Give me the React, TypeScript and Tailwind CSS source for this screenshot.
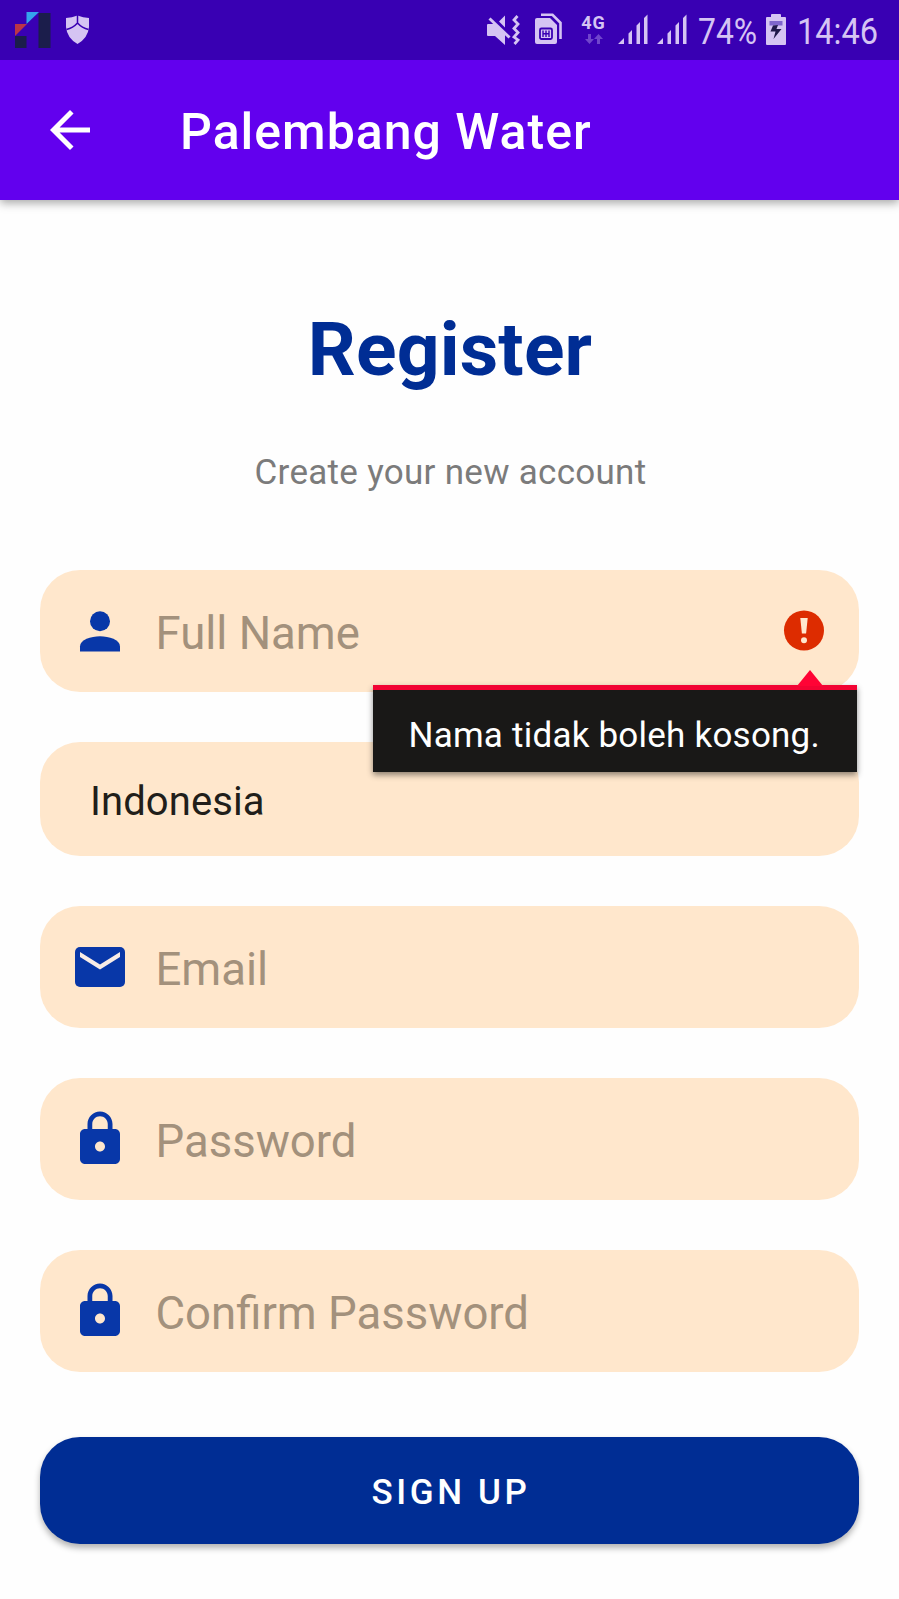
import type { ReactNode } from "react";

const LOCK =
  "M18 8h-1V6c0-2.760-2.240-5-5-5S7 3.240 7 6v2H6c-1.100 0-2 .9-2 2v10c0 1.100.9 2 2 2h12c1.100 0 2-.9 2-2V10c0-1.100-.9-2-2-2zm-6 9c-1.100 0-2-.9-2-2s.9-2 2-2 2 .9 2 2-.9 2-2 2zm3.100-9H8.900V6c0-1.710 1.390-3.100 3.100-3.100 1.710 0 3.100 1.390 3.100 3.100v2z";

function PersonIcon() {
  return (
    <svg viewBox="0 0 24 24" className="size-[60px] shrink-0 fill-[#0837a8]">
      <circle cx="12" cy="8.100" r="4" />
      <path d="M12 14.100c-3.600 0-8 1.400-8 4.100V20.200h16v-2c0-2.700-4.400-4.100-8-4.100z" />
    </svg>
  );
}

function MailIcon() {
  return (
    <svg viewBox="0 0 24 24" className="size-[60px] shrink-0">
      <rect x="2" y="4" width="20" height="16" rx="2" className="fill-[#0837a8]" />
      <path d="M4 6l8 5 8-5v2l-8 5-8-5z" className="fill-[#f8ece6]" />
    </svg>
  );
}

function LockIcon() {
  return (
    <svg viewBox="0 0 24 24" className="size-[60px] shrink-0 fill-[#0837a8]">
      <path d={LOCK} />
    </svg>
  );
}

function Field({ icon, label, children }: { icon: ReactNode; label: string; children?: ReactNode }) {
  return (
    <div className="relative flex h-[122px] items-center rounded-[40px] bg-[#ffe7cc] pl-[30px] pr-[25px]">
      {icon}
      <span className="ml-[25.5px] mt-[6px] flex-1 whitespace-nowrap text-[45.5px] leading-[60px] text-[#a3917c]">
        {label}
      </span>
      {children}
    </div>
  );
}

function Signal() {
  return (
    <svg viewBox="0 0 30 31" className="h-[31px] w-[30px] fill-[#d5c4f3]">
      <path d="M0 30l6-6V30zM10.500 19.500l3.500-3.500V30h-3.500zM18.500 11.500l3.500-3.500V30h-3.500zM26 4l3.500-3.500V30H26z" />
    </svg>
  );
}

function StatusBar() {
  return (
    <div className="z-10 flex h-[60px] items-start bg-[#3900b3] pl-[15px] text-[#d5c4f3]">
      <svg viewBox="0 0 36 36" className="mt-[12px] size-[36px]">
        <path d="M0 12h12L0 24z" fill="#bb3548" />
        <path d="M11.500 0H24L11.500 12z" fill="#35a4ec" />
        <path d="M0 24h11.500v12H0zM23.500 1H35.500v35H23.500z" fill="#1b1d4b" />
      </svg>
      <svg viewBox="0 0 24 29" className="ml-[15px] mt-[15px] h-[29px] w-[24px]">
        <path d="M0 3Q6 2.500 11.500 0.500 17 2.500 23 3V12Q22 23 11.500 29 1 23 0 12z" fill="#d5c4f3" />
        <path d="M11.500 0v8M.5 14.500Q7 13 11.500 8 16 13 22.500 14.500" fill="none" stroke="#3900b3" strokeWidth="1.500" />
      </svg>
      <svg viewBox="0 0 34 32" className="ml-[397px] mt-[14px] h-[32px] w-[34px]">
        <path d="M0 11q0-1 1-1h7l10 10v11L8 22H1q-1 0-1-1z" fill="#d5c4f3" />
        <path d="M12 7.500l6-6v12z" fill="#d5c4f3" />
        <path d="M2.500 4.500l20 19" stroke="#d5c4f3" strokeWidth="3" />
        <path d="M30.500 2l-3.500 4 4 4-4 4.500 4 4-4 4.500 4 3-3.500 4" fill="none" stroke="#d5c4f3" strokeWidth="2.800" />
      </svg>
      <svg viewBox="0 0 28 32" className="ml-[14px] mt-[13px] h-[32px] w-[28px]">
        <path d="M6 1.800h11.500l8 8V26" fill="none" stroke="#d5c4f3" strokeWidth="2.600" />
        <path d="M2 5h13l7 7v17q0 2-2 2H2q-2 0-2-2V7q0-2 2-2z" fill="#d5c4f3" />
        <rect x="5" y="15.500" width="12" height="10.500" rx="1.500" fill="none" stroke="#3900b3" strokeWidth="1.800" />
        <path d="M8 17.500v6.500M11 17.500v6.500M14 17.500v6.500M8 20.700h6" stroke="#3900b3" strokeWidth="1.400" />
      </svg>
      <div className="ml-[18px] mt-[14px] flex w-[25px] flex-col items-center">
        <span className="text-[18px] font-bold leading-[18px] tracking-[1px]">4G</span>
        <svg viewBox="0 0 18 10" className="mt-[2px] h-[10px] w-[18px] fill-[#7045cc]">
          <path d="M3 0h3v5h3l-4.500 5L0 5h3zM12 10h3V5h3l-4.500-5L9 5h3z" />
        </svg>
      </div>
      <div className="ml-[12px] mt-[14px] flex gap-[9px]">
        <Signal />
        <Signal />
      </div>
      <span className="ml-[10.500px] mt-[10px] w-[59px] origin-left scale-x-[0.860] whitespace-nowrap text-[37px] leading-[44px]">74%</span>
      <svg viewBox="0 0 20 31" className="ml-[9.500px] mt-[14px] h-[31px] w-[20px]">
        <path d="M0 4q0-1 1-1h4V1q0-1 1-1h8q1 0 1 1v2h4q1 0 1 1v26q0 1-1 1H1q-1 0-1-1z" fill="#d5c4f3" />
        <path d="M3.500 7h13v4.500h-13z" fill="#7f66cc" />
        <path d="M7 11.500l5-.5-1.500 4H15.500L7.500 25l2-7.500H4.500z" fill="#20194a" />
      </svg>
      <span className="ml-[11px] mt-[10px] w-[82px] origin-left scale-x-[0.880] whitespace-nowrap text-[37px] leading-[44px]">14:46</span>
    </div>
  );
}

function ErrorPopup() {
  return (
    <div className="absolute left-[333px] top-[114.5px] z-10 h-[87px] w-[484px] border-t-[5px] border-[#f20333] bg-[#191817] pl-[35.5px] pt-[25px] shadow-[0_3px_6px_rgba(0,0,0,0.45)]">
      <svg viewBox="0 0 26 16" className="absolute right-[34px] top-[-20px] h-[16px] w-[26px] fill-[#ff0335]">
        <path d="M13 0l13 16H0z" />
      </svg>
      <span className="block whitespace-nowrap text-[35px] leading-[42px] tracking-[0.220px] text-white">
        Nama tidak boleh kosong.
      </span>
    </div>
  );
}

export default function App() {
  return (
    <div className="flex h-[1599px] w-[899px] flex-col overflow-hidden bg-[#fefefe] font-[Roboto,sans-serif]">
      <StatusBar />
      <header className="flex h-[140px] items-center bg-[#6200ee] pl-[40px] shadow-[0_3px_9px_rgba(0,0,0,0.35)]">
        <svg viewBox="0 0 24 24" className="size-[60px] fill-white">
          <path d="M20 11H7.830l5.590-5.590L12 4l-8 8 8 8 1.410-1.410L7.830 13H20v-2z" />
        </svg>
        <h1 className="ml-[80px] mt-[4px] whitespace-nowrap text-[50px] font-medium leading-[60px] tracking-[1px] text-white">
          Palembang Water
        </h1>
      </header>
      <main className="flex flex-col px-[40px]">
        <h2 className="mt-[104px] pl-[1px] text-center text-[75px] font-bold leading-[90px] tracking-[0.150px] text-[#002d94]">
          Register
        </h2>
        <p className="mt-[58px] pl-[2px] text-center text-[35px] leading-[42px] tracking-[0.290px] text-[#7b7b7b]">
          Create your new account
        </p>
        <div className="mt-[76px] flex flex-col gap-[50px]">
          <Field icon={<PersonIcon />} label="Full Name">
            <svg viewBox="0 0 60 60" className="size-[60px]">
              <ellipse cx="30" cy="29.500" rx="20" ry="20" fill="#dd2c00" />
              <path d="M26.300 17h7.400l-1.600 15.500h-4.200z" fill="#ffe7cc" />
              <circle cx="30" cy="39.200" r="3" fill="#ffe7cc" />
            </svg>
            <ErrorPopup />
          </Field>
          <div className="flex h-[114px] items-center rounded-[40px] bg-[#ffe7cc] pl-[50px] text-[40px] leading-[50px] tracking-[0.100px] text-[#211e1a]">
            <span className="mt-[6px]">Indonesia</span>
          </div>
          <Field icon={<MailIcon />} label="Email" />
          <Field icon={<LockIcon />} label="Password" />
          <Field icon={<LockIcon />} label="Confirm Password" />
        </div>
        <button className="mt-[65px] h-[107px] rounded-[40px] bg-[#002d94] pl-[3px] pt-[5px] text-[35px] font-medium leading-[42px] tracking-[3.600px] text-white shadow-[0_4px_6px_rgba(0,0,0,0.3)]">
          SIGN UP
        </button>
      </main>
    </div>
  );
}
